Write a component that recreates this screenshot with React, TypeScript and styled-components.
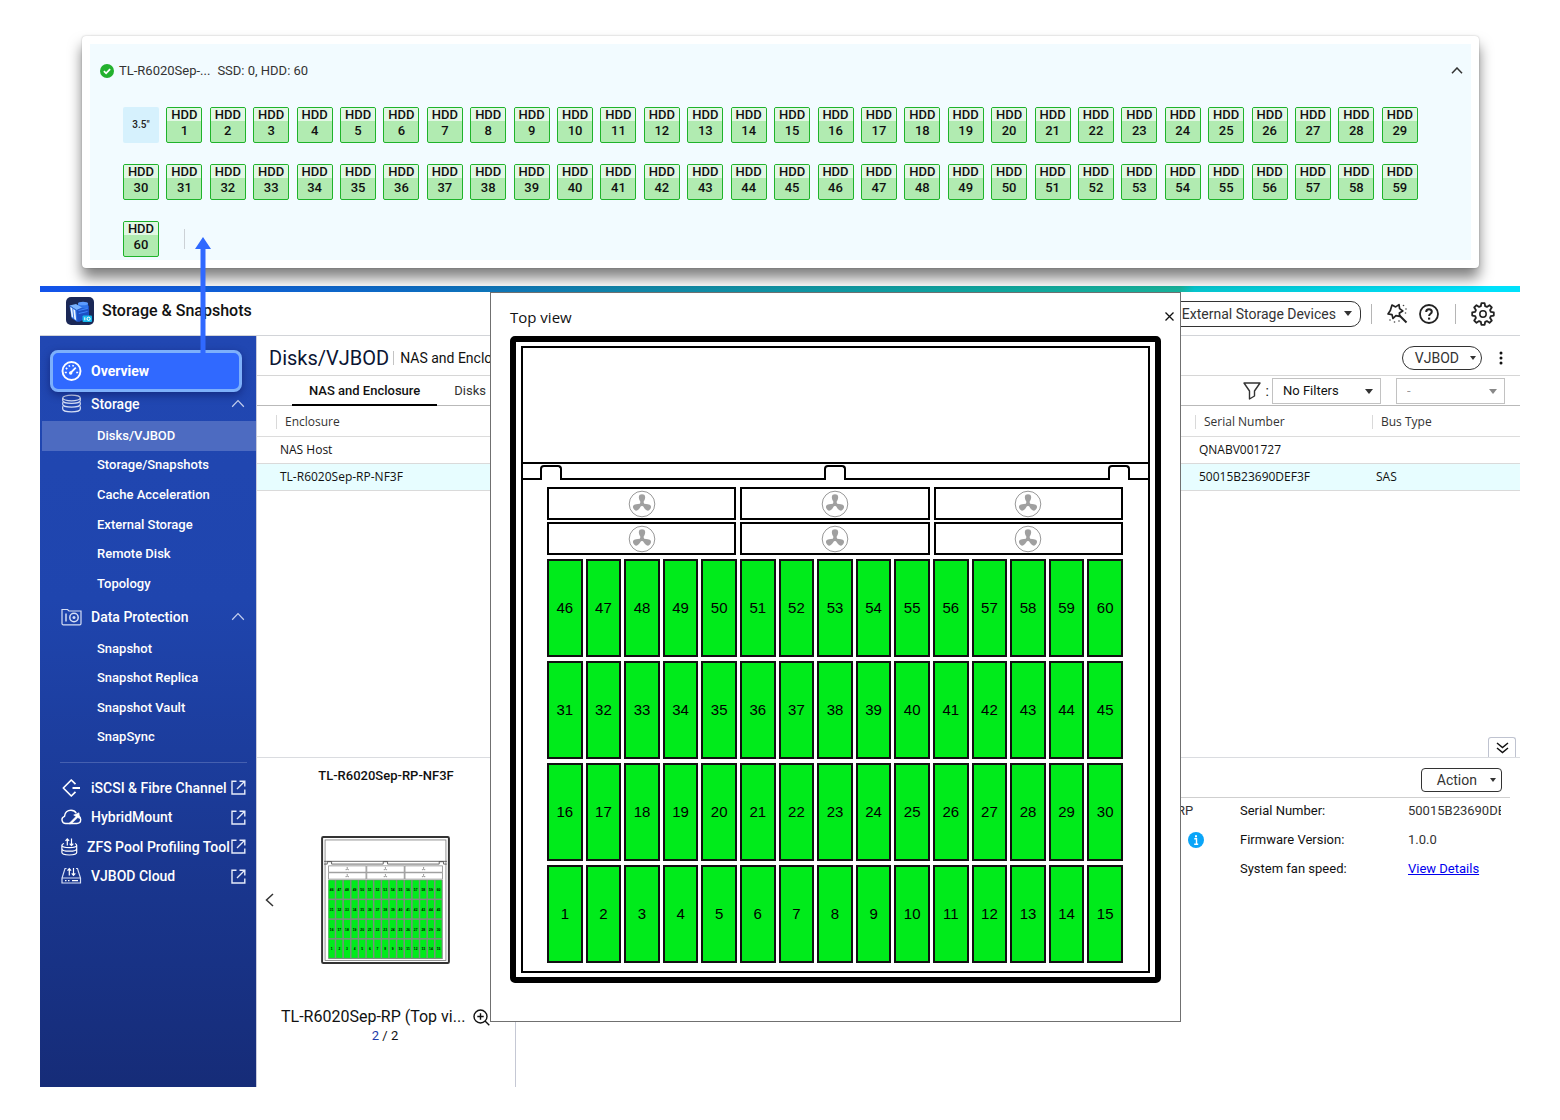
import React from 'react';
import styled, { createGlobalStyle, css } from 'styled-components';

const GlobalStyle = createGlobalStyle`
  *, *::before, *::after { box-sizing: border-box; }
  body { margin: 0; background: #fff; color: #111; font-family: Roboto, "Liberation Sans", sans-serif; font-size: 13px; line-height: 16px; }
  button, select { font: inherit; color: inherit; }
  h1, h2, h3, p, ul, dl, dd, dt { margin: 0; padding: 0; font-weight: 400; }
  ul { list-style: none; }
  svg { flex: none; }
`;

/* ---------- Page ---------- */

const Page = styled.div`
  padding: 36px 40px 33px;
`;

/* ---------- Disk map callout ---------- */

const Callout = styled.section`
  position: relative;
  z-index: 2;
  margin: 0 41px 18px 42px;
  padding: 8px;
  background: #fff;
  border-radius: 4px;
  box-shadow: 0 10px 14px rgba(0, 0, 0, 0.5), 0 0 2px rgba(0, 0, 0, 0.25);
`;

const DiskMap = styled.div`
  padding: 15px 8px 3px 10px;
  background: #f2fbff;
`;

const DiskMapHeader = styled.header`
  display: flex;
  align-items: center;
  height: 23px;
  color: #333;
`;

const EnclosureName = styled.h2`
  margin: 0 7px 0 5px;
  font-size: 13px;
`;

const Summary = styled.span`
  flex: 1;
`;

const PlainButton = styled.button`
  display: flex;
  align-items: center;
  justify-content: center;
  flex: none;
  padding: 0;
  border: 0;
  background: none;
  cursor: pointer;
`;

const SlotGrid = styled.ul`
  display: grid;
  grid-template-columns: repeat(30, 36px);
  justify-content: space-between;
  row-gap: 21px;
  margin: 25px 45px 0 23px;
`;

const SizeTag = styled.li`
  display: flex;
  align-items: center;
  justify-content: center;
  height: 36px;
  border-radius: 2px;
  background: #d6f1fd;
  color: #222;
  font-size: 10px;
  font-weight: 500;
`;

const Slot = styled.li`
  display: flex;
  flex-direction: column;
  height: 36px;
  border: 1px solid #1fb32b;
  border-radius: 2px;
  overflow: hidden;
  background: #b1ebb1;
  color: #111;
  font-weight: 500;
  line-height: 20px;
  text-align: center;
`;

const SlotKind = styled.span`
  height: 13px;
  background: #e2f7e4;
  line-height: 14px;
`;

const MapDivider = styled.li`
  align-self: center;
  justify-self: center;
  width: 1px;
  height: 20px;
  background: #ccd1d6;
`;

const CalloutArrow = styled.svg`
  position: absolute;
  left: 113px;
  top: 201px;
`;

/* ---------- Window ---------- */

const Window = styled.div`
  display: flex;
  flex-direction: column;
`;

const AccentBar = styled.div`
  height: 6px;
  background: linear-gradient(90deg, #1353ea 0%, #0d6cc4 25%, #1187a9 40%, #10a89f 65%, #18b39c 77%, #06c6cf 78%, #00e1fb 96%);
`;

const AppHeader = styled.header`
  display: flex;
  align-items: center;
  height: 44px;
  padding: 0 25px 5px 26px;
  border-bottom: 1px solid #d2d4d8;
`;

const AppTitle = styled.h1`
  flex: 1;
  margin-left: 8px;
  font-size: 16px;
  line-height: 20px;
  font-weight: 500;
`;

const HeaderTools = styled.div`
  display: flex;
  align-items: center;
  gap: 11px;
  padding-top: 5px;
`;

const ToolSeparator = styled.span`
  width: 1px;
  height: 20px;
  margin: 0 4px 0 5px;
  background: #b5b5b5;

  &:first-of-type {
    margin-left: -1px;
  }
`;

const OutlineButton = styled.button<{ $radius: number; $size: 'small' | 'large' }>`
  display: flex;
  align-items: center;
  justify-content: space-between;
  gap: ${(p) => (p.$size === 'large' ? 8 : 11)}px;
  height: ${(p) => (p.$size === 'large' ? 26 : 24)}px;
  padding: 0 ${(p) => (p.$size === 'large' ? 8 : 5)}px 0 12px;
  border: 1px solid #333;
  border-radius: ${(p) => p.$radius}px;
  background: #fff;
  color: #333;
  font-size: 14px;
  cursor: pointer;
`;

const Body = styled.div`
  position: relative;
  display: flex;
`;

/* ---------- Sidebar ---------- */

const Sidebar = styled.nav`
  flex: none;
  width: 216px;
  padding-top: 14px;
  background: linear-gradient(180deg, #2147b2 0%, #1f45ae 35%, #19358c 75%, #162c78 100%);
  color: #fff;
`;

const OverviewLink = styled.a`
  position: relative;
  z-index: 1;
  display: flex;
  align-items: center;
  gap: 9px;
  height: 42px;
  margin: 0 14px -6px 10px;
  padding-left: 8px;
  border: 3px solid #7db0fb;
  border-radius: 8px;
  background: #3069ff;
  box-shadow: 0 3px 8px rgba(0, 0, 60, 0.4);
  color: #fff;
  font-size: 14px;
  font-weight: 700;
  text-decoration: none;
`;

const GroupButton = styled.button`
  display: flex;
  align-items: center;
  gap: 9px;
  width: 100%;
  height: 35px;
  padding: 0 11px 0 21px;
  border: 0;
  background: none;
  font-size: 14px;
  font-weight: 500;
  text-align: left;
  cursor: pointer;
`;

const Grow = styled.span`
  flex: 1;
  min-width: 0;
  white-space: nowrap;
`;

const SubList = styled.ul<{ $height: number }>`
  display: grid;
  grid-auto-rows: 1fr;
  height: ${(p) => p.$height}px;
  padding-left: 2px;
`;

const SubLink = styled.a<{ $active?: boolean }>`
  display: flex;
  align-items: center;
  height: 100%;
  padding-left: 55px;
  color: #fff;
  font-weight: 500;
  text-decoration: none;
  ${(p) => p.$active && css`background: #4d6bc1;`}
`;

const Divider = styled.hr`
  height: 1px;
  margin: 10px 9px 10px 20px;
  border: 0;
  background: #4560b0;
`;

const AppLinks = styled.ul`
  display: grid;
  grid-template-columns: minmax(0, 1fr);
  grid-auto-rows: 1fr;
  height: 118px;
`;

const AppLink = styled.a<{ $tight?: boolean }>`
  display: flex;
  align-items: center;
  height: 100%;
  padding: 0 10px 0 21px;
  color: #fff;
  font-size: 14px;
  font-weight: 500;
  text-decoration: none;

  svg:first-child {
    margin-right: ${(p) => (p.$tight ? 5 : 9)}px;
  }
`;

/* ---------- Main ---------- */

const Main = styled.main`
  display: flex;
  flex-direction: column;
  flex: 1;
  min-width: 0;
  border-left: 1px solid #c9cbdc;
`;

const TitleBar = styled.div`
  display: flex;
  align-items: center;
  height: 40px;
  padding: 4px 15px 0 12px;
  border-bottom: 1px solid #d6d6d6;
`;

const PageTitle = styled.h2`
  color: #0b1533;
  font-size: 20px;
  line-height: 24px;
`;

const TitleNote = styled.span`
  flex: 1;
  margin-left: 4px;
  padding-left: 6px;
  border-left: 1px solid #c4c4c4;
  font-size: 14px;
  line-height: 14px;
`;

const Kebab = styled(PlainButton)`
  width: 8px;
  margin-left: 15px;
`;

const TabBar = styled.div`
  display: flex;
  align-items: center;
  height: 30px;
  padding: 0 15px 0 35px;
  border-bottom: 1px solid #b9b9b9;
`;

const Tab = styled.button<{ $active?: boolean }>`
  height: 30px;
  padding: 3px 17px 0;
  border: 0;
  border-bottom: 2px solid ${(p) => (p.$active ? '#000' : 'transparent')};
  background: none;
  color: ${(p) => (p.$active ? '#111' : '#333')};
  font-weight: ${(p) => (p.$active ? 500 : 400)};
  cursor: pointer;
`;

const Filters = styled.div`
  display: flex;
  align-items: center;
  margin-left: auto;
`;

const FilterLabel = styled.label`
  display: flex;
  align-items: center;
  gap: 5px;
  margin-right: 3px;
  font-size: 14px;
`;

const SelectBox = styled.span<{ $muted?: boolean }>`
  position: relative;
  display: flex;
  color: ${(p) => (p.$muted ? '#999' : '#111')};
  & + & { margin-left: 15px; }
  svg { position: absolute; right: 8px; top: 11px; pointer-events: none; }
`;

const Select = styled.select`
  appearance: none;
  width: 109px;
  height: 26px;
  padding: 0 20px 0 10px;
  border: 1px solid #c2c2c2;
  border-radius: 0;
  background: #fff;
  color: inherit;
  opacity: 1;
`;

const ListArea = styled.div`
  position: relative;
  min-height: 351px;
`;

const Table = styled.table`
  width: 100%;
  table-layout: fixed;
  border-collapse: collapse;
  font-family: "Open Sans", "Noto Sans", sans-serif;
  font-size: 12px;
`;

const Col = styled.col<{ $w?: number }>`
  width: ${(p) => (p.$w ? `${p.$w}px` : 'auto')};
`;

const HeadRow = styled.tr`
  height: 30px;
  border-bottom: 1px solid #dcdcdc;
`;

const HeadCell = styled.th`
  padding: 2px 0 0;
  color: #333;
  font-weight: 400;
  text-align: left;
`;

const HeadLabel = styled.span`
  display: block;
  padding-left: 8px;
  border-left: 1px solid #d9d9d9;
  line-height: 14px;
`;

const Row = styled.tr<{ $selected?: boolean }>`
  height: 27px;
  border-bottom: 1px solid #dadada;
  background: ${(p) => (p.$selected ? '#e7fdff' : '#fff')};
`;

const Cell = styled.td`
  padding: 1px 0 0 4px;
`;

const CollapseButton = styled.button`
  position: absolute;
  right: 4px;
  bottom: 0;
  display: flex;
  align-items: center;
  justify-content: center;
  width: 28px;
  height: 20px;
  padding: 0;
  border: 1px solid #bfc3d0;
  border-bottom: 0;
  border-radius: 3px 3px 0 0;
  background: #fff;
  cursor: pointer;
`;

/* ---------- Details ---------- */

const Details = styled.section`
  display: flex;
  min-height: 330px;
  border-top: 1px solid #dadce0;
`;

const Preview = styled.div`
  display: flex;
  flex-direction: column;
  align-items: center;
  flex: none;
  width: 259px;
  padding-top: 10px;
  border-right: 1px solid #c5c8d4;
`;

const PreviewTitle = styled.h3`
  font-size: 13px;
  font-weight: 500;
`;

const PreviewStage = styled.div`
  display: grid;
  grid-template-columns: 24px 1fr 26px;
  align-items: center;
  width: 100%;
  margin-top: 52px;
`;

const Thumb = styled.svg`
  justify-self: center;
`;

const PreviewCaption = styled.div`
  display: flex;
  align-items: center;
  align-self: stretch;
  gap: 8px;
  margin-top: 42px;
  padding-left: 24px;
  font-size: 16px;
  line-height: 22px;
  white-space: nowrap;
`;

const Pager = styled.p`
  padding-right: 2px;
  b { color: #1c3aa9; font-weight: 400; }
`;

const Info = styled.div`
  flex: 1;
  min-width: 0;
  padding-right: 10px;
`;

const InfoBar = styled.div`
  display: flex;
  align-items: center;
  justify-content: flex-end;
  height: 40px;
  padding: 5px 8px 0 0;
  border-bottom: 1px solid #cfcfcf;
`;

const ActionButton = styled(OutlineButton)`
  padding-left: 15px;
  gap: 13px;
`;

const Fields = styled.dl`
  display: grid;
  grid-template-columns: 1fr 144px 168px 93px;
  grid-auto-rows: 25px;
  row-gap: 4px;
  align-items: center;
  margin-right: 9px;
`;

const Value = styled.dd`
  display: flex;
  align-items: center;
  min-width: 0;
  overflow: hidden;
  color: #333;
  white-space: nowrap;
`;

const StatusIcon = styled.svg`
  margin: 0 36px 0 auto;
`;

const TextLink = styled.a`
  color: #0000ee;
`;

/* ---------- Top view dialog ---------- */

const Dialog = styled.div`
  position: absolute;
  left: 450px;
  top: -44px;
  width: 691px;
  padding: 0 19px 38px;
  border: 1px solid #707070;
  background: #fff;
`;

const DialogHeader = styled.header`
  display: flex;
  align-items: center;
  justify-content: space-between;
  height: 43px;
  padding-top: 4px;
  margin-right: -13px;
`;

const DialogTitle = styled.h2`
  font-family: "Open Sans", "Noto Sans", sans-serif;
  font-size: 15px;
  line-height: 20px;
`;

const Chassis = styled.div`
  padding: 4px 5px;
  border: 6px solid #000;
  border-radius: 5px;
`;

const ChassisInner = styled.div`
  border: 2px solid #000;
`;

const LidSpace = styled.div`
  height: 114px;
`;

const Shelf = styled.div`
  display: flex;
  justify-content: space-between;
  align-items: flex-end;
  height: 18px;
  padding: 0 18px 0 17px;
  border-top: 2px solid #000;
  border-bottom: 2px solid #000;
`;

const ShelfTab = styled.span`
  width: 22px;
  height: 15px;
  margin-bottom: -2px;
  border: 2px solid #000;
  border-bottom: 0;
  border-radius: 4px 4px 0 0;
  background: #fff;
`;

const Hardware = styled.div`
  display: grid;
  gap: 4px;
  padding: 7px 25px 8px 24px;
`;

const FanGrid = styled.div`
  display: grid;
  grid-template-columns: repeat(3, 1fr);
  gap: 2px 4px;
`;

const FanBox = styled.div`
  display: flex;
  align-items: center;
  justify-content: center;
  height: 33px;
  border: 2px solid #000;
`;

const BayGrid = styled.div`
  display: grid;
  grid-template-columns: repeat(15, 1fr);
  gap: 4px 3px;
`;

const Bay = styled.div`
  display: flex;
  align-items: center;
  justify-content: center;
  height: 98px;
  border: 2px solid #111;
  background: #00eb1b;
  color: #000;
  font-family: "Liberation Sans", Arial, sans-serif;
  font-size: 15px;
`;

/* ---------- Icons ---------- */

const Caret = ({ w = 8, color = '#333' }: { w?: number; color?: string }) => (
  <svg width={w} height={w > 6 ? 5 : 4} viewBox="0 0 8 5" preserveAspectRatio="none" aria-hidden="true">
    <path d="M0 0h8L4 5z" fill={color} />
  </svg>
);

const CheckBadge = () => (
  <svg width="14" height="14" viewBox="0 0 14 14" aria-hidden="true">
    <circle cx="7" cy="7" r="7" fill="#23b12e" />
    <path d="M3.9 7.2l2.2 2.1 4-4.1" fill="none" stroke="#fff" strokeWidth="1.8" />
  </svg>
);

const ChevronUp = ({ w = 12, h = 7, sw = 1.2, color = 'currentColor' }: { w?: number; h?: number; sw?: number; color?: string }) => (
  <svg width={w} height={h} viewBox="0 0 12 7" fill="none" stroke={color} strokeWidth={sw} aria-hidden="true">
    <path d="M1 6.3L6 1l5 5.3" />
  </svg>
);

const AppLogo = () => (
  <svg width="28" height="28" viewBox="0 0 28 28" aria-hidden="true">
    <rect width="28" height="28" rx="5" fill="#1b2856" />
    <path d="M10 11l13-2.500v11L13 25l-3-1z" fill="#1c4fc4" />
    <path d="M12 6.500v4.500l10 1V6.500z" fill="#2f74ea" />
    <ellipse cx="17" cy="6.500" rx="5" ry="1.800" fill="#5b9bff" />
    <path d="M3.500 8.500L10 7l6 3.500-5.500 2.500z" fill="#79b2ff" />
    <path d="M3.500 8.500l7 4.500 1 12-6-4z" fill="#2e6fe4" />
    <path d="M4.300 10l2 1.300 1 9.700-1.700-1.200zM7.200 12l2 1.300 1 9.900-1.900-1.300z" fill="#eaf3ff" />
    <path d="M12.500 13.500l9-2M12.800 16.500l8.700-2" stroke="#3f86ff" />
    <rect x="16.500" y="18.500" width="9.500" height="6.500" rx="1" fill="#16b9ee" />
    <path d="M18.800 20.300v3" stroke="#fff" />
    <circle cx="22.600" cy="21.800" r="1.600" fill="none" stroke="#fff" />
  </svg>
);

const WandIcon = () => (
  <svg width="21" height="21" viewBox="0 0 21 21" fill="none" aria-hidden="true">
    <path d="M5 2l3.700 1.900L12 1.600l.6 4 3.200 2.300-3.400 2 .2 3.400-3.700-.6L6 15.500l-1-3.900-4-.7 2.300-3.300z" stroke="#222" strokeWidth="1.700" strokeLinejoin="round" />
    <path d="M12.500 12.500l7 7" stroke="#222" strokeWidth="2" />
    <g fill="#444">
      <circle cx="16.500" cy="2.500" r=".8" /><circle cx="19" cy="6" r=".8" /><circle cx="18.500" cy="10" r=".8" />
      <circle cx="3" cy="17" r=".8" /><circle cx="7.500" cy="19" r=".8" /><circle cx="12" cy="18" r=".8" />
    </g>
  </svg>
);

const HelpIcon = () => (
  <svg width="20" height="20" viewBox="0 0 20 20" fill="none" stroke="#222" strokeWidth="1.800" aria-hidden="true">
    <circle cx="10" cy="10" r="9" />
    <path d="M7.200 8c0-1.700 1.200-2.700 2.800-2.700s2.800 1 2.800 2.500c0 2-2.700 2-2.700 4.300" strokeWidth="2" />
    <path d="M9 13.600h2.200v2H9z" fill="#222" stroke="none" />
  </svg>
);

const GearIcon = () => (
  <svg width="24" height="24" viewBox="0 0 24 24" fill="none" stroke="#222" strokeWidth="1.800" strokeLinejoin="round" aria-hidden="true">
    <path d="M10.400 1.200h3.200l.6 3 1.700.7 2.600-1.700 2.300 2.300-1.700 2.600.7 1.700 3 .6v3.200l-3 .6-.7 1.700 1.700 2.600-2.300 2.300-2.600-1.700-1.700.7-.6 3h-3.200l-.6-3-1.700-.7-2.600 1.700-2.300-2.300 1.700-2.600-.7-1.700-3-.6v-3.200l3-.6.7-1.700-1.700-2.600 2.300-2.300 2.600 1.700 1.700-.7z" />
    <circle cx="12" cy="12" r="3.200" strokeWidth="1.500" />
  </svg>
);

const KebabIcon = () => (
  <svg width="4" height="14" viewBox="0 0 4 14" fill="#111" aria-hidden="true">
    <circle cx="2" cy="2" r="1.500" /><circle cx="2" cy="7" r="1.500" /><circle cx="2" cy="12" r="1.500" />
  </svg>
);

const FunnelIcon = () => (
  <svg width="18" height="18" viewBox="0 0 18 18" fill="none" stroke="#333" strokeWidth="1.400" strokeLinejoin="round" aria-hidden="true">
    <path d="M1 1h16l-5.500 8v5L6.500 17V9z" />
  </svg>
);

const DoubleChevron = () => (
  <svg width="13" height="12" viewBox="0 0 13 12" fill="none" stroke="#111" strokeWidth="1.500" aria-hidden="true">
    <path d="M1 1l5.500 4.500L12 1M1 6l5.500 4.500L12 6" />
  </svg>
);

const ZoomInIcon = () => (
  <svg width="17" height="17" viewBox="0 0 17 17" fill="none" stroke="#111" strokeWidth="1.400" aria-hidden="true">
    <circle cx="7.500" cy="7.500" r="6.500" />
    <path d="M12 12l4.300 4.300M7.500 4.300v6.400M4.300 7.500h6.400" />
  </svg>
);

const SideIcon = ({ children }: { children: React.ReactNode }) => (
  <svg width="21" height="20" viewBox="0 0 21 20" fill="none" stroke="currentColor" strokeWidth="1.200" aria-hidden="true">
    {children}
  </svg>
);

const GaugeIcon = () => (
  <SideIcon>
    <circle cx="10.500" cy="10" r="9" strokeWidth="1.900" />
    <path d="M9.500 12l5.300-5.300" strokeWidth="1.800" />
    <circle cx="9.700" cy="12" r="1.700" fill="currentColor" stroke="none" />
    <path d="M3.800 11.500h2M4.800 7l1.500 1M8 4.200l.7 1.600M12.300 4l-.5 1.600M15.200 11.500h2" strokeWidth="1.600" />
  </SideIcon>
);

const DiskStackIcon = () => (
  <SideIcon>
    <g stroke="#d5def5">
      <ellipse cx="10.500" cy="4" rx="8.800" ry="2.800" />
      <path d="M1.700 4v2.500c0 1.600 4 2.900 8.800 2.900s8.800-1.300 8.800-2.900V4M1.700 8.300v2c0 1.600 4 2.900 8.800 2.900s8.800-1.300 8.800-2.900v-2M1.700 12.200V15c0 1.600 4 2.900 8.800 2.900s8.800-1.300 8.800-2.900v-2.800" />
    </g>
  </SideIcon>
);

const VaultIcon = () => (
  <SideIcon>
    <g stroke="#d5def5">
      <path d="M1 16.500v-14h5.500l1.500 1.500h12v12.500a1.300 1.300 0 01-1.300 1.300H2.300A1.300 1.300 0 011 16.500z" />
      <path d="M5 6.500v8" strokeWidth="1.500" />
      <circle cx="13" cy="10.500" r="4.200" strokeWidth="1.500" />
      <circle cx="13" cy="10.500" r="1.500" fill="#d5def5" stroke="none" />
    </g>
  </SideIcon>
);

const IscsiIcon = () => (
  <SideIcon>
    <path d="M14.500 6.200L10.300 2 2.300 10l8 8 4.200-4.200" strokeWidth="1.700" strokeLinejoin="round" />
    <path d="M11.500 10h7.500" strokeWidth="2" />
  </SideIcon>
);

const HybridIcon = () => (
  <SideIcon>
    <path d="M9.500 16.500H4.700a3.700 3.700 0 01-1.200-7.200C4 5.500 6.500 3.300 10 3.300c2.500 0 4.300 1.200 5.200 2.900" strokeWidth="1.400" />
    <path d="M17.500 8.800c1.500.8 2.200 2.200 2.200 3.800 0 2.200-1.500 3.900-3.800 3.900H8.500" strokeWidth="1.400" />
    <path d="M8 16.500l7-7-2.300-1.500 5.300-2.200.5 5.700-1.700-1-6.300 6z" fill="currentColor" strokeWidth=".6" />
  </SideIcon>
);

const ZfsIcon = () => (
  <SideIcon>
    <path d="M6.300 8.500V2M4.500 3.800L6.300 1.800l1.800 2M10.500 1.500v7M8.700 6.700l1.800 2 1.800-2" strokeWidth="1.200" />
    <path d="M3 6.500C1.500 7 .9 7.500.9 8.200c0 1.400 3.300 2.400 7.400 2.400s7.400-1 7.400-2.400c0-.7-.6-1.200-1.700-1.700M.9 11.700c0 1.400 3.300 2.500 7.400 2.500s7.400-1.100 7.400-2.500M.9 8.200v7.400C.9 17 4.200 18 8.300 18s7.400-1 7.400-2.400V8.200" strokeWidth="1.200" />
  </SideIcon>
);

const VjbodIcon = () => (
  <SideIcon>
    <path d="M5.500 2.500H4L1 12v5h18.500v-5l-3-9.500H15M1 12h18.500" stroke="#d5def5" />
    <path d="M8.300 9.500V2.800M6.500 4.600l1.800-2 1.800 2M12.500 2v7.200M10.700 7.300l1.800 2 1.800-2M4 14.600h1.500M7 14.600h1.500M11 14.600h6" />
  </SideIcon>
);

const OpenIcon = () => (
  <svg width="15" height="15" viewBox="0 0 15 15" fill="none" stroke="#e6ecfa" strokeWidth="1.400" aria-hidden="true">
    <path d="M5.500 1.200H1v12.800h12.800V9.500M8.500 1.200h5.300v5.300M13.500 1.500L6 9" />
  </svg>
);

const FanBlades = ({ ring = true }: { ring?: boolean }) => (
  <>
    {ring && <circle cx="14" cy="14" r="12.800" fill="none" stroke="#999" />}
    {[0, 120, 240].map((a) => (
      <path key={a} transform={`rotate(${a} 14 14)`} d="M13 14c0-2.500-2.400-4.300-2.200-7.100.1-1.900 1.400-2.600 3.200-2.600s3.100.7 3.200 2.600c.2 2.800-2.200 4.600-2.200 7.100z" fill="#a0a0a0" />
    ))}
    <circle cx="14" cy="14" r="2.200" fill="#a0a0a0" />
  </>
);

/* ---------- Data ---------- */

const bays = [46, 31, 16, 1].flatMap((start) => Array.from({ length: 15 }, (_, i) => start + i));
const slots = Array.from({ length: 60 }, (_, i) => i + 1);
const storageItems = ['Disks/VJBOD', 'Storage/Snapshots', 'Cache Acceleration', 'External Storage', 'Remote Disk', 'Topology'];
const protectionItems = ['Snapshot', 'Snapshot Replica', 'Snapshot Vault', 'SnapSync'];
const appLinks = [
  { label: 'iSCSI & Fibre Channel', Icon: IscsiIcon },
  { label: 'HybridMount', Icon: HybridIcon },
  { label: 'ZFS Pool Profiling Tool', Icon: ZfsIcon, tight: true },
  { label: 'VJBOD Cloud', Icon: VjbodIcon },
];

const ChassisThumb = () => (
  <Thumb width="129" height="128" viewBox="0 0 651 647" role="img" aria-label="Enclosure top view">
    <rect x="5" y="5" width="641" height="637" rx="6" fill="#fff" stroke="#333" strokeWidth="10" />
    <g fill="none" stroke="#777" strokeWidth="4">
      <rect x="20" y="20" width="611" height="609" />
      <path d="M15 128h621M15 142h16v-12h22v12h261v-12h22v12h261v-12h22v12h16" stroke="#444" />
    </g>
    {[0, 1, 2].map((c) =>
      [0, 1].map((r) => (
        <g key={`${c}${r}`} transform={`translate(${38 + c * 193} ${151 + r * 35})`}>
          <rect width="189" height="32" fill="#fff" stroke="#888" strokeWidth="4" />
          <g transform="translate(80 2)"><FanBlades ring={false} /></g>
        </g>
      )),
    )}
    <rect x="36" y="222" width="579" height="400" fill="#7d8f7f" />
    {bays.map((n, i) => (
      <g key={n} transform={`translate(${38 + (i % 15) * 38.6} ${224 + Math.floor(i / 15) * 100})`}>
        <rect width="31" height="92" fill="#00eb1b" />
        <text x="15.500" y="54" textAnchor="middle" fontFamily="Liberation Sans, Arial, sans-serif" fontSize="17" fontWeight="700" fill="#000">{n}</text>
      </g>
    ))}
  </Thumb>
);

/* ---------- Sections ---------- */

const DiskCallout = () => (
  <Callout>
    <DiskMap>
      <DiskMapHeader>
        <CheckBadge />
        <EnclosureName>TL-R6020Sep-...</EnclosureName>
        <Summary>SSD: 0, HDD: 60</Summary>
        <PlainButton aria-label="Collapse"><ChevronUp sw={1.5} /></PlainButton>
      </DiskMapHeader>
      <SlotGrid>
        <SizeTag>3.5"</SizeTag>
        {slots.map((n) => (
          <Slot key={n}>
            <SlotKind>HDD</SlotKind>
            {n}
          </Slot>
        ))}
        <MapDivider aria-hidden="true" />
      </SlotGrid>
    </DiskMap>
    <CalloutArrow width="16" height="117" viewBox="0 0 16 117" aria-hidden="true">
      <path d="M8 0l8 12h-5.500v105h-5V12H0z" fill="#3069ff" />
    </CalloutArrow>
  </Callout>
);

const SideNav = () => (
  <Sidebar aria-label="Storage">
    <OverviewLink href="#overview"><GaugeIcon />Overview</OverviewLink>
    <GroupButton><DiskStackIcon /><Grow>Storage</Grow><ChevronUp w={14} h={9} sw={1} color="#c5d0ee" /></GroupButton>
    <SubList $height={178}>
      {storageItems.map((t, i) => (
        <li key={t}><SubLink href="#storage" $active={i === 0}>{t}</SubLink></li>
      ))}
    </SubList>
    <GroupButton><VaultIcon /><Grow>Data Protection</Grow><ChevronUp w={14} h={9} sw={1} color="#c5d0ee" /></GroupButton>
    <SubList $height={118}>
      {protectionItems.map((t) => (
        <li key={t}><SubLink href="#protection">{t}</SubLink></li>
      ))}
    </SubList>
    <Divider />
    <AppLinks>
      {appLinks.map(({ label, Icon, tight }) => (
        <li key={label}>
          <AppLink href="#app" $tight={tight}><Icon /><Grow>{label}</Grow><OpenIcon /></AppLink>
        </li>
      ))}
    </AppLinks>
  </Sidebar>
);

const TopViewDialog = () => (
  <Dialog role="dialog" aria-label="Top view">
    <DialogHeader>
      <DialogTitle>Top view</DialogTitle>
      <PlainButton aria-label="Close">
        <svg width="9" height="9" viewBox="0 0 9 9" stroke="#111" strokeWidth="1.300" aria-hidden="true">
          <path d="M.5.5l8 8M8.500.5l-8 8" />
        </svg>
      </PlainButton>
    </DialogHeader>
    <Chassis>
      <ChassisInner>
        <LidSpace />
        <Shelf><ShelfTab /><ShelfTab /><ShelfTab /></Shelf>
        <Hardware>
          <FanGrid>
            {Array.from({ length: 6 }, (_, i) => (
              <FanBox key={i}>
                <svg width="28" height="28" viewBox="0 0 28 28" aria-hidden="true"><FanBlades /></svg>
              </FanBox>
            ))}
          </FanGrid>
          <BayGrid>{bays.map((n) => <Bay key={n}>{n}</Bay>)}</BayGrid>
        </Hardware>
      </ChassisInner>
    </Chassis>
  </Dialog>
);

export default function App() {
  return (
    <Page>
      <GlobalStyle />
      <DiskCallout />
      <Window>
        <AccentBar />
        <AppHeader>
          <AppLogo />
          <AppTitle>Storage &amp; Snapshots</AppTitle>
          <HeaderTools>
            <OutlineButton $radius={10} $size="large">External Storage Devices<Caret /></OutlineButton>
            <ToolSeparator />
            <PlainButton aria-label="Tools"><WandIcon /></PlainButton>
            <PlainButton aria-label="Help"><HelpIcon /></PlainButton>
            <ToolSeparator />
            <PlainButton aria-label="Settings"><GearIcon /></PlainButton>
          </HeaderTools>
        </AppHeader>
        <Body>
          <SideNav />
          <Main>
            <TitleBar>
              <PageTitle>Disks/VJBOD</PageTitle>
              <TitleNote>NAS and Enclosure</TitleNote>
              <OutlineButton $radius={12} $size="small">VJBOD<Caret w={6} /></OutlineButton>
              <Kebab aria-label="More"><KebabIcon /></Kebab>
            </TitleBar>
            <TabBar>
              <Tab $active>NAS and Enclosure</Tab>
              <Tab>Disks</Tab>
              <Filters>
                <FilterLabel htmlFor="filter" aria-label="Filter"><FunnelIcon />:</FilterLabel>
                <SelectBox>
                  <Select id="filter"><option>No Filters</option></Select>
                  <Caret />
                </SelectBox>
                <SelectBox $muted>
                  <Select aria-label="Filter value" disabled><option>-</option></Select>
                  <Caret color="#888" />
                </SelectBox>
              </Filters>
            </TabBar>
            <ListArea>
              <Table>
                <colgroup><Col $w={19} /><Col /><Col $w={177} /><Col $w={148} /></colgroup>
                <thead>
                  <HeadRow>
                    <HeadCell />
                    <HeadCell><HeadLabel>Enclosure</HeadLabel></HeadCell>
                    <HeadCell><HeadLabel>Serial Number</HeadLabel></HeadCell>
                    <HeadCell><HeadLabel>Bus Type</HeadLabel></HeadCell>
                  </HeadRow>
                </thead>
                <tbody>
                  <Row><Cell /><Cell>NAS Host</Cell><Cell>QNABV001727</Cell><Cell /></Row>
                  <Row $selected><Cell /><Cell>TL-R6020Sep-RP-NF3F</Cell><Cell>50015B23690DEF3F</Cell><Cell>SAS</Cell></Row>
                </tbody>
              </Table>
              <CollapseButton aria-label="Collapse details"><DoubleChevron /></CollapseButton>
            </ListArea>
            <Details>
              <Preview>
                <PreviewTitle>TL-R6020Sep-RP-NF3F</PreviewTitle>
                <PreviewStage>
                  <PlainButton aria-label="Previous">
                    <svg width="9" height="14" viewBox="0 0 9 14" fill="none" stroke="#333" strokeWidth="1.500" aria-hidden="true">
                      <path d="M8 1L1.500 7 8 13" />
                    </svg>
                  </PlainButton>
                  <ChassisThumb />
                </PreviewStage>
                <PreviewCaption>
                  TL-R6020Sep-RP (Top vi...
                  <PlainButton aria-label="Zoom in"><ZoomInIcon /></PlainButton>
                </PreviewCaption>
                <Pager><b>2</b> / 2</Pager>
              </Preview>
              <Info>
                <InfoBar>
                  <ActionButton $radius={4} $size="small">Action<Caret w={6} /></ActionButton>
                </InfoBar>
                <Fields>
                  <dt aria-label="Model" />
                  <Value>TL-R6020Sep-RP</Value>
                  <dt>Serial Number:</dt>
                  <Value>50015B23690DEF3F</Value>
                  <dt aria-label="Status" />
                  <Value>
                    <StatusIcon width="16" height="16" viewBox="0 0 16 16" aria-hidden="true">
                      <circle cx="8" cy="8" r="8" fill="#0aa5f8" />
                      <path d="M6.300 6.800h2.200V12M6.200 12.200h4" fill="none" stroke="#fff" strokeWidth="1.400" />
                      <path d="M7 3.200h2v2H7z" fill="#fff" />
                    </StatusIcon>
                  </Value>
                  <dt>Firmware Version:</dt>
                  <Value>1.0.0</Value>
                  <dt aria-label="Fan" />
                  <Value />
                  <dt>System fan speed:</dt>
                  <Value><TextLink href="#fan">View Details</TextLink></Value>
                </Fields>
              </Info>
            </Details>
          </Main>
          <TopViewDialog />
        </Body>
      </Window>
    </Page>
  );
}
